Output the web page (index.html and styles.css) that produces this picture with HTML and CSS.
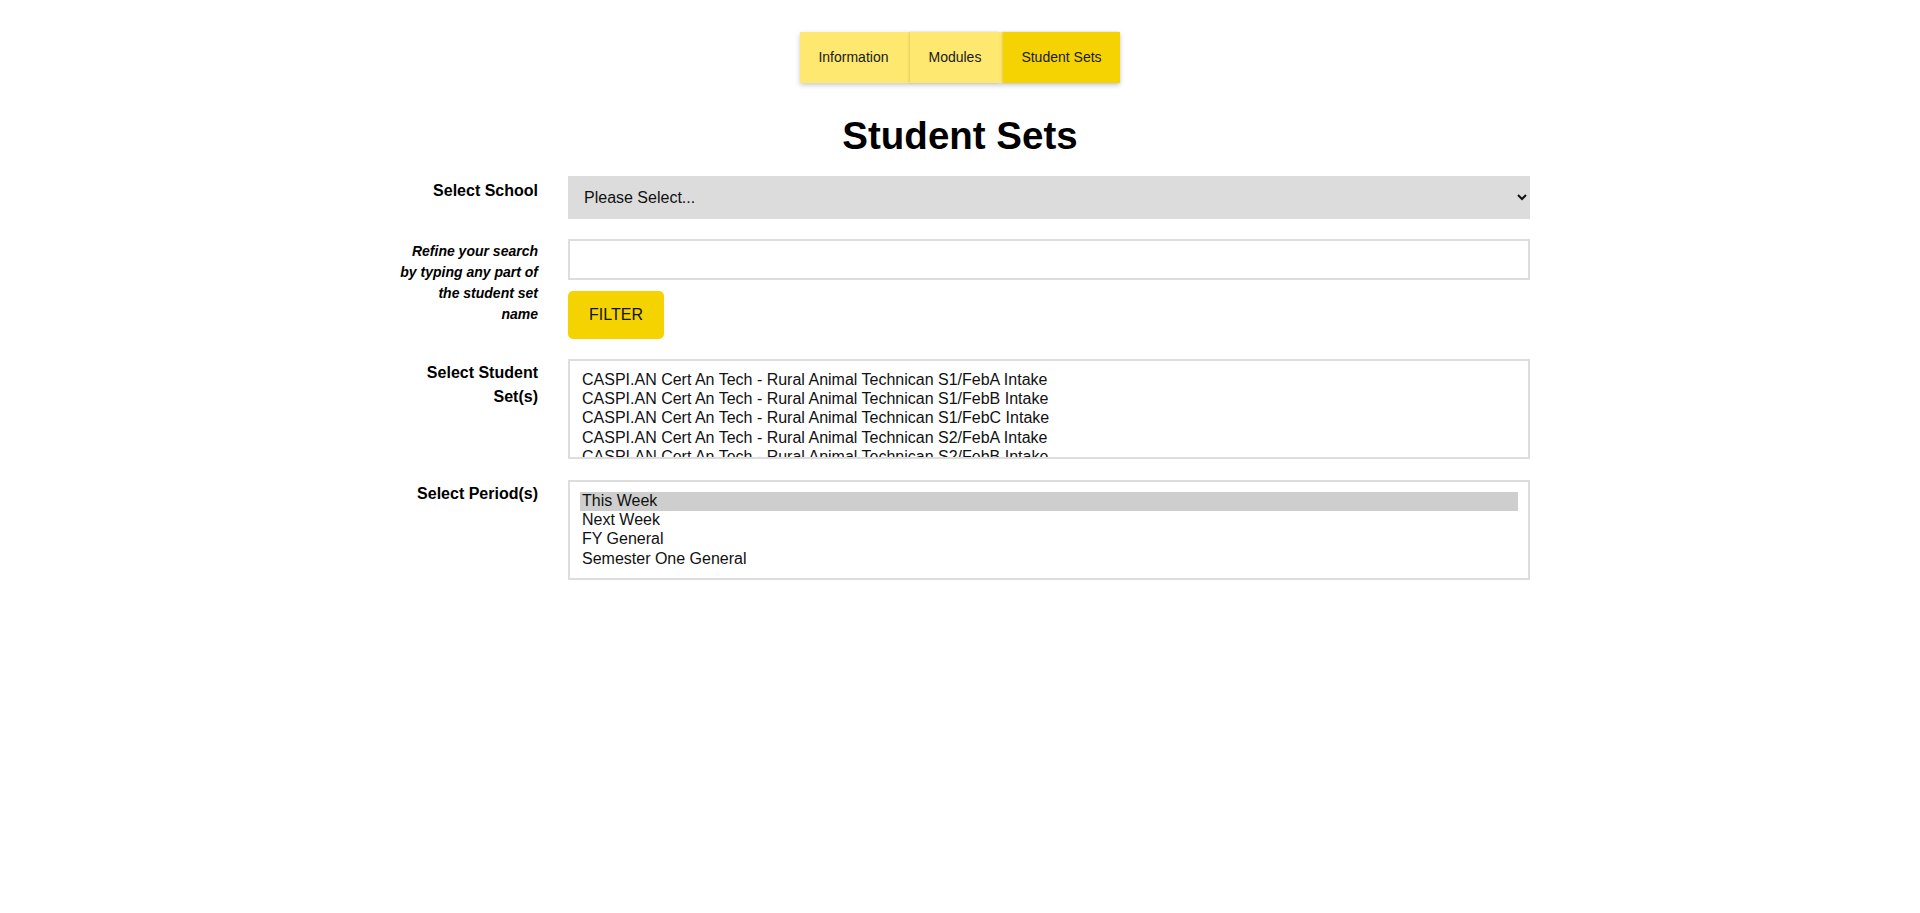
FILE: index.html
```html
<!DOCTYPE html>
<html lang="en">
<head>
<meta charset="utf-8">
<title>Student Sets</title>
<link rel="stylesheet" href="styles.css">
</head>
<body>
  <nav class="nav">
    <div class="tabs">
      <a class="tab" href="#">Information</a>
      <a class="tab" href="#">Modules</a>
      <a class="tab active" href="#">Student Sets</a>
    </div>
  </nav>

  <h1 class="title">Student Sets</h1>

  <div class="wrap">
    <form class="form">
      <label class="label" for="school">Select School</label>
      <div class="field">
        <select id="school" class="dropdown">
          <option>Please Select...</option>
        </select>
      </div>

      <label class="label note" for="search">Refine your search by typing any part of the student set name</label>
      <div class="field">
        <input id="search" class="text" type="text">
        <button type="button" class="btn">FILTER</button>
      </div>

      <label class="label" for="sets">Select Student Set(s)</label>
      <div class="field">
        <select id="sets" class="list sets" multiple>
          <option>CASPI.AN Cert An Tech - Rural Animal Technican S1/FebA Intake</option>
          <option>CASPI.AN Cert An Tech - Rural Animal Technican S1/FebB Intake</option>
          <option>CASPI.AN Cert An Tech - Rural Animal Technican S1/FebC Intake</option>
          <option>CASPI.AN Cert An Tech - Rural Animal Technican S2/FebA Intake</option>
          <option>CASPI.AN Cert An Tech - Rural Animal Technican S2/FebB Intake</option>
          <option>CASPI.AN Cert An Tech - Rural Animal Technican S2/FebC Intake</option>
          <option>CASPI.AN Cert An Tech - Rural Animal Technican S1/JulA Intake</option>
          <option>CASPI.AN Cert An Tech - Rural Animal Technican S2/JulA Intake</option>
        </select>
      </div>

      <label class="label" for="periods">Select Period(s)</label>
      <div class="field">
        <select id="periods" class="list" multiple>
          <option selected>This Week</option>
          <option>Next Week</option>
          <option>FY General</option>
          <option>Semester One General</option>
        </select>
      </div>
    </form>
  </div>
</body>
</html>
```

FILE: styles.css
```css
* {
  box-sizing: border-box;
}

body {
  margin: 0;
  background: #ffffff;
  color: #111111;
  font-family: "Liberation Sans", Arial, sans-serif;
}

.nav {
  display: flex;
  justify-content: center;
  padding-top: 32px;
}

.tabs {
  display: flex;
  gap: 4px;
  background: #fee86f;
  box-shadow: 0 2px 5px rgba(0, 0, 0, 0.22);
}

.tab {
  display: flex;
  align-items: center;
  height: 51px;
  padding: 0 18px 1px;
  font-size: 14px;
  color: #1a1a1a;
  text-decoration: none;
  background: #fee86f;
}

.tab + .tab {
  box-shadow: -1px 0 2px rgba(0, 0, 0, 0.12);
}

.tab.active {
  background: #f5d302;
}

.title {
  margin: 30px 0 18px;
  font-size: 38.5px;
  line-height: 45px;
  font-weight: bold;
  text-align: center;
  color: #000;
}

.wrap {
  width: 1140px;
  margin: 0 auto;
  padding-left: 9px;
}

.form {
  display: grid;
  grid-template-columns: 139px 1fr;
  column-gap: 30px;
  row-gap: 20px;
  align-items: start;
}

.label {
  padding-top: 2px;
  text-align: right;
  font-size: 16px;
  line-height: 24px;
  font-weight: bold;
  color: #000;
}

.label:first-child {
  padding-top: 3px;
}

.label.note {
  font-size: 14px;
  line-height: 21px;
  font-style: italic;
  padding-top: 2px;
}

.field {
  display: flex;
  flex-direction: column;
  align-items: flex-start;
}

.dropdown {
  display: block;
  width: 100%;
  height: 43px;
  padding: 0 12px;
  border: none;
  border-radius: 0;
  background: #dcdcdc;
  font-family: "Liberation Sans", Arial, sans-serif;
  font-size: 16px;
  color: #111;
}

.text {
  display: block;
  width: 100%;
  height: 41px;
  padding: 0 10px;
  border: 2px solid #dddddd;
  border-radius: 0;
  font-family: "Liberation Sans", Arial, sans-serif;
  font-size: 16px;
  outline: none;
}

.btn {
  margin-top: 11px;
  height: 48px;
  padding: 0 21px;
  border: none;
  border-radius: 5px;
  background: #f4d300;
  color: #111;
  font-family: "Liberation Sans", Arial, sans-serif;
  font-size: 16px;
}

.list {
  display: block;
  width: 100%;
  height: 100px;
  padding: 10px;
  border: 2px solid #dddddd;
  border-radius: 0;
  background: #fff;
  font-family: "Liberation Sans", Arial, sans-serif;
  font-size: 16px;
  color: #111;
  outline: none;
  scrollbar-width: none;
  overflow: hidden;
}

.list.sets {
  margin-bottom: 1px;
}

.list option:checked {
  background: linear-gradient(#cecece, #cecece);
  color: #111;
}
```
